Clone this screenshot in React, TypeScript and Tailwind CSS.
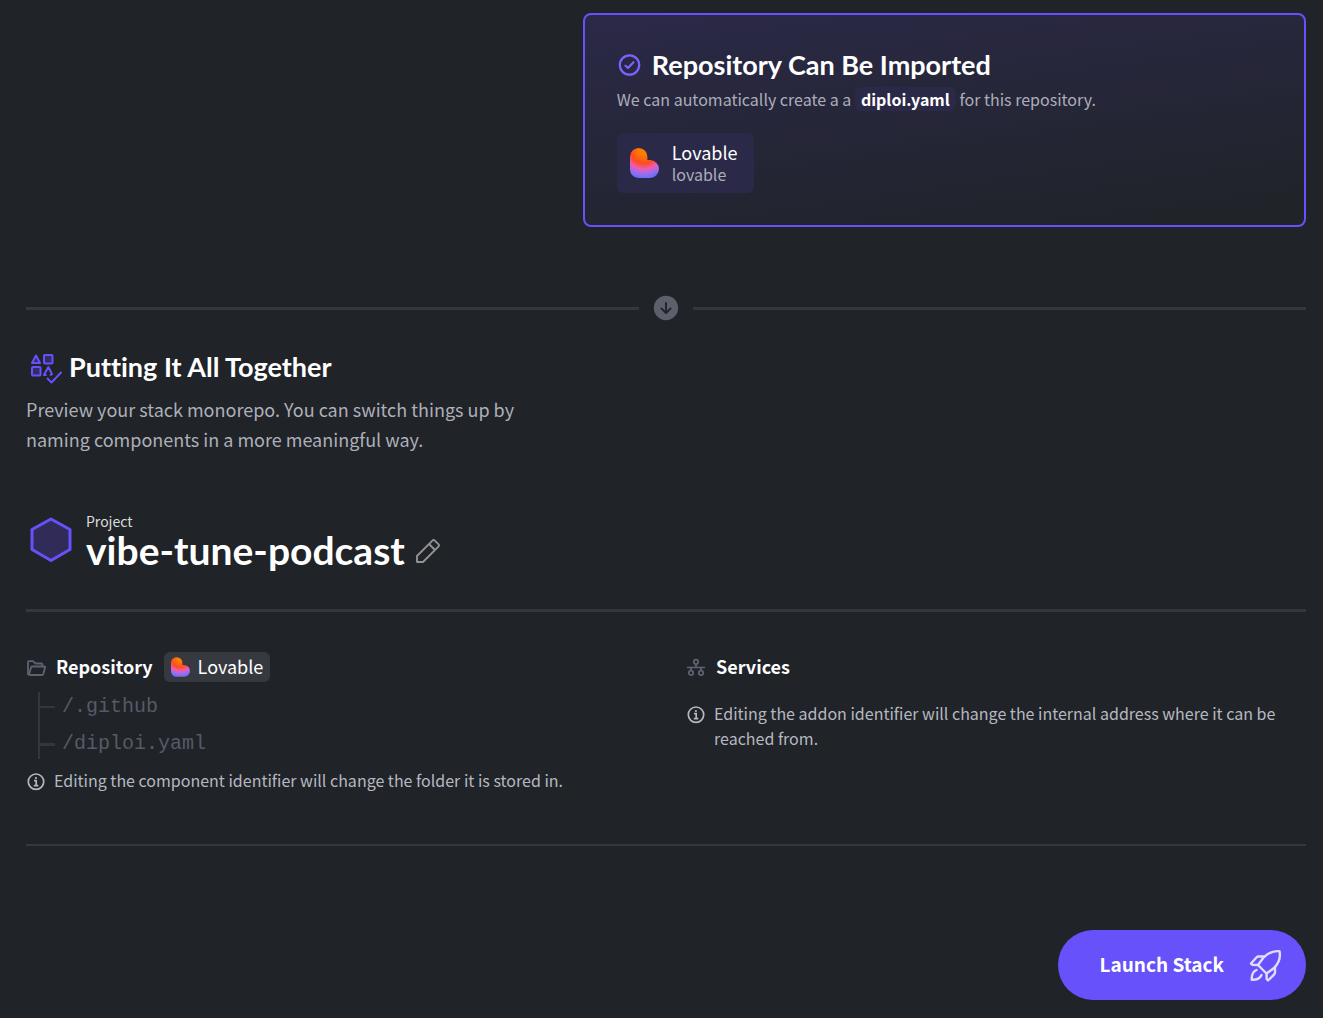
import React, { useId } from "react";
import { IoArrowDownCircle } from "react-icons/io5";

function LovableLogo({ className }: { className: string }) {
  const id = useId();
  return (
    <svg viewBox="0 0 29 30" className={className} aria-hidden="true">
      <defs>
        <radialGradient id={id} gradientUnits="userSpaceOnUse" cx="14" cy="2" r="30">
          <stop offset="0.15" stopColor="#ff7e00" />
          <stop offset="0.45" stopColor="#ff4b22" />
          <stop offset="0.63" stopColor="#ef5cb0" />
          <stop offset="0.8" stopColor="#9a6cf0" />
          <stop offset="1" stopColor="#4b73ff" />
        </radialGradient>
      </defs>
      <path
        fill={`url(#${id})`}
        d="M0 8.7A8.7 8.7 0 0 1 17.4 8.7V12H20A9 9 0 0 1 20 30H8.5A8.5 8.5 0 0 1 0 21.5Z"
      />
    </svg>
  );
}

function CheckCircleIcon() {
  return (
    <svg
      width="26"
      height="26"
      viewBox="0 0 26 26"
      fill="none"
      stroke="#7c62ff"
      strokeWidth="2.2"
      strokeLinecap="round"
      strokeLinejoin="round"
      className="shrink-0"
      aria-hidden="true"
    >
      <circle cx="12.5" cy="13" r="9.7" />
      <path d="M8.5 13.7 11 16 16.5 10.2" />
    </svg>
  );
}

function StackCheckIcon() {
  return (
    <svg
      width="36"
      height="36"
      viewBox="0 0 36 36"
      fill="#342c66"
      stroke="#6751fb"
      strokeWidth="2"
      strokeLinejoin="round"
      className="shrink-0"
      aria-hidden="true"
    >
      <path d="M10 6.5 14 14H6Z" />
      <rect x="18" y="6" width="8.5" height="8.5" rx="1" />
      <rect x="6" y="18" width="8.5" height="8.5" rx="1" />
      <path fill="none" d="M20.5 26H18L22.3 18 26 25 24 26.5" />
      <path fill="none" d="M21 29 25.5 33.5 35.5 23" />
    </svg>
  );
}

function PencilIcon() {
  return (
    <svg
      width="24"
      height="24"
      viewBox="0 0 24 24"
      fill="none"
      stroke="#929292"
      strokeWidth="1.9"
      strokeLinejoin="round"
      aria-hidden="true"
    >
      <path d="M1 22.8V17L16.4 1.6a1.7 1.7 0 0 1 2.4 0L22.4 5.2a1.7 1.7 0 0 1 0 2.4L7 23H1.2Z" />
      <path d="M13 5 19 11" />
    </svg>
  );
}

function FolderIcon() {
  return (
    <svg
      width="20"
      height="20"
      viewBox="0 0 20 20"
      fill="none"
      stroke="#5f636f"
      strokeWidth="1.8"
      strokeLinejoin="round"
      className="shrink-0"
      aria-hidden="true"
    >
      <path d="M3.5 18C2.5 18 2 17.5 2 16.5V5C2 4.5 2.3 4.2 2.8 4.2H7L9.5 6.5H15.5C16 6.5 16.3 6.8 16.3 7.3V9.5" />
      <path d="M3 17.7 5 10.5C5.2 9.8 5.5 9.5 6 9.5H18.3C19 9.5 19.2 10 19 10.5L17.3 17C17.1 17.7 16.7 18 16 18H3.5" />
    </svg>
  );
}

function ServicesIcon() {
  return (
    <svg
      width="18"
      height="18"
      viewBox="0 0 18 18"
      fill="none"
      stroke="#5f636f"
      strokeWidth="1.7"
      className="shrink-0"
      aria-hidden="true"
    >
      <circle cx="9" cy="3.9" r="2.2" />
      <circle cx="4" cy="14.9" r="2.2" />
      <circle cx="14" cy="14.9" r="2.2" />
      <path d="M9 6V9.5M0 9.5H18M4 9.5V12.7M14 9.5V12.7" />
    </svg>
  );
}

function InfoIcon() {
  return (
    <svg
      width="20"
      height="20"
      viewBox="0 0 20 20"
      fill="none"
      stroke="currentColor"
      strokeWidth="1.7"
      className="mt-1 shrink-0"
      aria-hidden="true"
    >
      <circle cx="10" cy="9.7" r="7.7" />
      <path d="M8 8.7H10.2V13.7M7.8 13.7H12.3" />
      <circle cx="9.9" cy="6" r="1.1" fill="currentColor" stroke="none" />
    </svg>
  );
}

function RocketIcon() {
  return (
    <svg
      width="36"
      height="36"
      viewBox="0 -1 36 36"
      fill="none"
      stroke="#e2dcff"
      strokeWidth="2.4"
      strokeLinejoin="round"
      strokeLinecap="round"
      aria-hidden="true"
    >
      <path d="M31.5 3.2C25 2.5 20.5 4.5 15.5 9.5L10 17 18.5 25.5 26 20C31 15 33 10.5 31.5 3.2Z" />
      <path d="M16.5 8.5H10.5C9.5 8.5 9 8.8 8.4 9.5L3 15.5 4.5 16.8 10 17" />
      <path d="M27 19V24.5C27 25.5 26.7 26 26 26.7L20 32.5 18.7 31 18.5 25.5" />
      <path d="M8.5 22C5 23.5 3.5 26.5 3.7 31.8 9 32 12 30.5 13.5 27" />
    </svg>
  );
}

function InfoNote({ children }: { children: React.ReactNode }) {
  return (
    <div className="flex gap-2 text-base leading-[25px] text-[#b6b8c1]">
      <InfoIcon />
      <p>{children}</p>
    </div>
  );
}

export default function App() {
  return (
    <main className="min-h-screen bg-[#202328] pt-[13px] pr-[17px] pb-[18px] pl-[26px] font-['Noto_Sans_CJK_SC',sans-serif] text-white">
      <section className="ml-auto w-[56.5%] rounded-lg border-2 border-[#6751fb] bg-linear-[172deg] from-[#2b2948] to-[#202328] to-95% px-8 pt-[30px] pb-8">
        <div className="flex items-center gap-[9px]">
          <CheckCircleIcon />
          <h2 className="font-['Lato',sans-serif] text-[27px] leading-10 font-bold [font-variant-ligatures:none]">
            Repository Can Be Imported
          </h2>
        </div>
        <p className="text-base leading-[28px] text-[#adadbb]">
          We can automatically create a a{" "}
          <code className="rounded-md bg-[#2b2948] px-[6px] font-['Noto_Sans_CJK_SC',sans-serif] font-bold text-white">
            diploi.yaml
          </code>{" "}
          for this repository.
        </p>
        <div className="mt-5 flex w-fit items-center gap-[13px] rounded-md bg-[#2b2948] pr-4 pl-[13px]">
          <LovableLogo className="h-[30px] w-[29px]" />
          <div className="pt-[7px] pb-[9px]">
            <p className="text-lg leading-6">Lovable</p>
            <p className="text-base leading-5 text-[#adadbb]">lovable</p>
          </div>
        </div>
      </section>

      <div className="mt-[66px] flex items-center gap-3">
        <hr className="grow border-t-3 border-[#34373f]" />
        <IoArrowDownCircle className="size-[30px] text-[#5c606c]" aria-hidden="true" />
        <hr className="grow border-t-3 border-[#34373f]" />
      </div>

      <section className="mt-6">
        <div className="flex items-center gap-[7px]">
          <StackCheckIcon />
          <h2 className="font-['Lato',sans-serif] text-[27px] leading-10 font-bold [font-variant-ligatures:none]">
            Putting It All Together
          </h2>
        </div>
        <p className="mt-[7px] max-w-[520px] text-lg leading-[30px] text-[#adafb9]">
          Preview your stack monorepo. You can switch things up by naming components in a more
          meaningful way.
        </p>
      </section>

      <div className="mt-[57px] flex gap-[11px]">
        <svg width="49" height="49" viewBox="0 0 49 49" className="mt-1 shrink-0" aria-hidden="true">
          <path
            d="M25 4 44 14.5V34.5L25 45.5 6 34.5V14.5Z"
            fill="#312c57"
            stroke="#6751fb"
            strokeWidth="3"
            strokeLinejoin="round"
          />
        </svg>
        <div>
          <p className="text-sm leading-5 text-[#dddddd]">Project</p>
          <div className="flex items-center gap-[11px]">
            <h1 className="pb-[2px] font-['Lato',sans-serif] text-[39px] leading-[38px] font-bold">
              vibe-tune-podcast
            </h1>
            <button type="button" aria-label="Rename project">
              <PencilIcon />
            </button>
          </div>
        </div>
      </div>

      <hr className="mt-[38px] border-t-3 border-[#34373f]" />

      <div className="mt-10 grid grid-cols-2 gap-10">
        <section>
          <div className="flex items-center">
            <FolderIcon />
            <h3 className="ml-[10px] pb-[2px] text-lg leading-7 font-bold">Repository</h3>
            <span className="ml-[11px] flex items-center gap-2 rounded-md bg-[#373941] px-[7px]">
              <LovableLogo className="h-5 w-[19px]" />
              <span className="pb-[2px] text-lg leading-7">Lovable</span>
            </span>
          </div>
          <ul className="mt-[10px] ml-3 border-l-2 border-[#34373f] font-['Liberation_Mono',monospace] text-xl leading-7 text-[#565a65]">
            <li className="flex h-[30px] items-center gap-[7px]">
              <span className="h-[2px] w-[15px] bg-[#34373f]" />
              /.github
            </li>
            <li className="mt-[7px] flex h-[30px] items-center gap-[7px]">
              <span className="h-[3px] w-[15px] bg-[#34373f]" />
              /diploi.yaml
            </li>
          </ul>
          <div className="mt-[9px]">
            <InfoNote>
              Editing the component identifier will change the folder it is stored in.
            </InfoNote>
          </div>
        </section>
        <section>
          <div className="flex items-center gap-[11px] pl-px">
            <ServicesIcon />
            <h3 className="pb-[2px] text-lg leading-7 font-bold">Services</h3>
          </div>
          <div className="mt-[19px]">
            <InfoNote>
              Editing the addon identifier will change the internal address where it can be reached
              from.
            </InfoNote>
          </div>
        </section>
      </div>

      <hr className="mt-[51px] border-t-2 border-[#34373f]" />

      <div className="mt-[84px] flex justify-end">
        <button
          type="button"
          className="flex h-[70px] items-center gap-6 rounded-full bg-[#6751fb] pr-[22px] pl-[41px] text-[19px] font-bold"
        >
          <span className="pb-[2px]">Launch Stack</span>
          <RocketIcon />
        </button>
      </div>
    </main>
  );
}
